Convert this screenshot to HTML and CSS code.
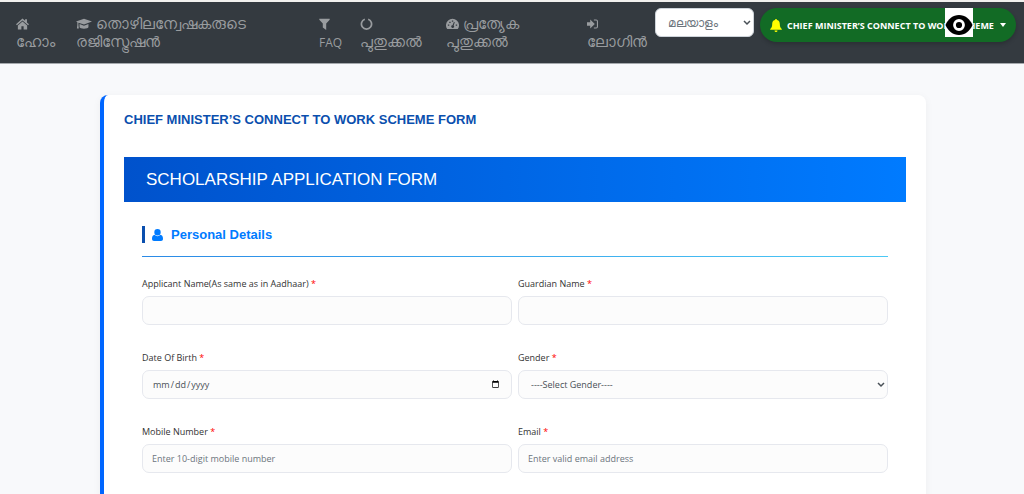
FILE: index.html
```html
<!DOCTYPE html>
<html lang="en">
<head>
    <meta charset="UTF-8">
    <meta name="viewport" content="width=device-width, initial-scale=1.0">
    <title>Scholarship Application Form</title>
    <link rel="stylesheet" href="styles.css">
</head>
<body>
    <header class="navbar">
        <nav class="nav-links">
            <a href="#">
                <svg class="icon" viewBox="0 0 14 12"><path d="M7 0 0 6.300l1 1.100 6-5.200 6 5.200 1-1.100-2.200-2V.8H9.800v1.700zM7 3.200 2 7.500V12h3.800V8.500h2.400V12H12V7.500z"/></svg><br>
                <span>ഹോം</span>
            </a>
            <a href="#">
                <svg class="icon icon-wide" viewBox="0 0 18 12"><path d="M9 0 0 3.200l1.500.7V7L1 11h2.200L2.700 7V4.500L9 6.700l9-3.500zM4 6v3.500c0 2.300 10 2.300 10 0V6L9 8z"/></svg>
                <span>തൊഴിലന്വേഷകരുടെ രജിസ്ട്രേഷൻ</span>
            </a>
            <a href="#">
                <svg class="icon icon-small" viewBox="0 0 11 12"><path d="M.3.800h10.400v1L7.200 5.600V12L3.800 9.500V5.600L.3 1.800z"/></svg><br>
                <span class="latin">FAQ</span>
            </a>
            <a href="#">
                <svg class="icon" viewBox="0 0 14 14"><path class="ring" d="M5 1.500a5.900 5.900 0 1 0 4 0"/></svg><br>
                <span>പുതുക്കൽ</span>
            </a>
            <a href="#">
                <svg class="icon" viewBox="0 0 14 12"><path fill-rule="evenodd" d="M1.300 11.500A7 7 0 1 1 12.700 11.500zM2 6.500v1.500h1.500V6.500zm1.500-3V5H5V3.500zm2.800-1.300v1.500h1.500V2.200zm4.200 4.300V8H12V6.500zM8.500 3.800 7 7.300a1.500 1.500 0 1 0 1.200.4l1.300-3.500z"/></svg>
                <span>പ്രത്യേക പുതുക്കൽ</span>
            </a>
            <a href="#">
                <svg class="icon icon-small" viewBox="0 0 12 12"><path d="M0 4h3.500V1L8.500 6l-5 5V8H0zM7.500 1H10a2 2 0 0 1 2 2v6a2 2 0 0 1-2 2H7.500V9.800H10a.8.8 0 0 0 .8-.8V3a.8.8 0 0 0-.8-.8H7.500z"/></svg><br>
                <span>ലോഗിൻ</span>
            </a>
        </nav>
        <select class="language" aria-label="Language">
            <option>മലയാളം</option>
        </select>
        <button class="scheme-btn" type="button">
            <svg class="bell" viewBox="0 0 12 13"><path d="M6 0a1 1 0 0 0-1 1C2.800 1.500 2.200 3.300 2.200 5 2.200 8 1.300 9 .2 10v.8h11.600V10c-1.100-1-2-2-2-5 0-1.700-.6-3.500-2.800-4a1 1 0 0 0-1-1zM4.500 11.500a1.500 1.500 0 0 0 3 0z"/></svg>
            <span>CHIEF MINISTER’S CONNECT TO WORK SCHEME</span>
            <span class="caret"></span>
            <svg class="eye" viewBox="0 0 28 29"><path fill="#fff" d="M0 0h28v29H0z"/><path d="M.5 17C3 11 8 7 14 7s11 4 13.500 10C25 23 20 27 14 27S3 23 .5 17z"/><circle cx="14" cy="17" r="4.500" fill="none" stroke="#fff" stroke-width="2.800"/></svg>
        </button>
    </header>

    <main class="page">
        <div class="card">
            <h1>CHIEF MINISTER’S CONNECT TO WORK SCHEME FORM</h1>
            <h2 class="banner">SCHOLARSHIP APPLICATION FORM</h2>
            <form class="details">
                <div class="section-head">
                    <h3>
                        <svg class="user" viewBox="0 0 11 12"><path d="M5.500 0a3 3 0 0 1 0 6.400 3 3 0 0 1 0-6.400zM2.600 5.800c1.500 1.900 4.300 1.900 5.800 0C10.200 6 11 7.800 11 9.800c0 1.400-.8 2.200-2 2.200H2c-1.200 0-2-.8-2-2.200 0-2 .8-3.800 2.600-4z"/></svg>
                        Personal Details
                    </h3>
                </div>
                <div class="form-grid">
                    <div class="form-group">
                        <label for="applicant">Applicant Name(As same as in Aadhaar) <span class="required">*</span></label>
                        <input type="text" id="applicant">
                    </div>
                    <div class="form-group">
                        <label for="guardian">Guardian Name <span class="required">*</span></label>
                        <input type="text" id="guardian">
                    </div>
                    <div class="form-group">
                        <label for="dob">Date Of Birth <span class="required">*</span></label>
                        <input type="date" id="dob">
                    </div>
                    <div class="form-group">
                        <label for="gender">Gender <span class="required">*</span></label>
                        <select id="gender">
                            <option>----Select Gender----</option>
                        </select>
                    </div>
                    <div class="form-group">
                        <label for="mobile">Mobile Number <span class="required">*</span></label>
                        <input type="tel" id="mobile" placeholder="Enter 10-digit mobile number">
                    </div>
                    <div class="form-group">
                        <label for="email">Email <span class="required">*</span></label>
                        <input type="email" id="email" placeholder="Enter valid email address">
                    </div>
                </div>
            </form>
        </div>
    </main>
</body>
</html>
```
FILE: styles.css
```css
* {
    box-sizing: border-box;
}

body {
    margin: 0;
    background-color: #f8f9fb;
    font-family: "Trebuchet MS", "Open Sans", sans-serif;
    font-size: 10px;
    color: #333;
}

h1,
h2,
h3 {
    margin: 0;
    font-family: "Liberation Sans", Arial, sans-serif;
}

.navbar {
    display: flex;
    align-items: flex-start;
    gap: 6px;
    padding: 6px 8px 10px 16px;
    min-height: 64px;
    background-color: #343a40;
    border-top: 2px solid #f1f0ee;
    border-bottom: 1px solid #a5a9ad;
}

.nav-links {
    flex: 1;
    display: grid;
    grid-template-columns: 60fr 243fr 41fr 86fr 141fr 62fr;
    padding-top: 6px;
}

.nav-links a {
    color: #999c9f;
    font-size: 15px;
    line-height: 18px;
    text-decoration: none;
}

.nav-links a:nth-child(2),
.nav-links a:nth-child(5) {
    padding-right: 48px;
}

.nav-links .latin {
    font-size: 12px;
    font-weight: 500;
}

.icon {
    width: 13px;
    height: 12px;
    vertical-align: -1px;
    fill: currentColor;
}

.icon-wide {
    width: 16px;
}

.icon-small {
    width: 11px;
}

.ring {
    fill: none;
    stroke: currentColor;
    stroke-width: 2;
}

.language,
.form-group select {
    appearance: none;
    background-image: url("data:image/svg+xml,%3Csvg xmlns='http://www.w3.org/2000/svg' viewBox='0 0 8 6'%3E%3Cpath d='M1 1l3 3 3-3' fill='none' stroke='%23495057' stroke-width='1.500'/%3E%3C/svg%3E");
    background-repeat: no-repeat;
    background-position: right 2px center;
    background-size: 8px 6px;
}

.language {
    width: 99px;
    height: 29px;
    padding: 0 12px;
    border: 1px solid #ced4da;
    border-radius: 6px;
    background-color: #fff;
    color: #6c757d;
    font: inherit;
    font-size: 12px;
}

.scheme-btn {
    position: relative;
    display: flex;
    align-items: center;
    gap: 5px;
    width: 256px;
    height: 34px;
    padding: 0 10px;
    border: none;
    border-radius: 17px;
    background-color: #126b25;
    box-shadow: 0 2px 4px rgba(0, 0, 0, 0.2);
    color: #fff;
    font: inherit;
    font-size: 9px;
    font-weight: bold;
    white-space: nowrap;
}

.bell {
    width: 12px;
    height: 13px;
    fill: #ff0;
}

.caret {
    margin-left: auto;
    border-top: 4px solid #fff;
    border-left: 3px solid transparent;
    border-right: 3px solid transparent;
}

.eye {
    position: absolute;
    top: 0;
    right: 43px;
    width: 28px;
    height: 29px;
}

.page {
    padding: 31px 98px 0 100px;
}

.card {
    padding: 16px 20px 40px;
    background-color: #fff;
    border-left: 4px solid #06f;
    border-radius: 8px;
    box-shadow: 0 2px 8px rgba(0, 0, 0, 0.05);
}

.card h1 {
    color: #0a4fae;
    font-size: 13px;
    line-height: 18px;
}

.banner {
    margin-top: 28px;
    padding: 11px 22px;
    background: linear-gradient(90deg, #0052cc, #007bff);
    color: #fff;
    font-size: 17px;
    font-weight: normal;
    line-height: 23px;
}

.details {
    padding: 24px 18px 0;
}

.section-head {
    padding-bottom: 13px;
    border-bottom: 1px solid;
    border-image: linear-gradient(90deg, #2b8ae6, #4cc9f5) 1;
}

.section-head h3 {
    display: flex;
    align-items: center;
    gap: 8px;
    padding-left: 7px;
    border-left: 3px solid #0a4fae;
    color: #007bff;
    font-size: 13px;
    line-height: 17px;
}

.user {
    width: 11px;
    height: 12px;
    fill: currentColor;
}

.form-grid {
    display: grid;
    grid-template-columns: 1fr 1fr;
    gap: 25px 6px;
    padding-top: 19px;
}

.form-group label {
    display: block;
    margin-bottom: 5px;
    font-size: 9px;
    font-weight: 500;
    line-height: 15px;
}

.required {
    color: #f00;
}

.form-group input,
.form-group select {
    display: block;
    width: 100%;
    height: 29px;
    padding: 0 9px;
    border: 1px solid #e6e8ee;
    border-radius: 7px;
    background-color: #fcfcfc;
    color: #495057;
    font: inherit;
    font-size: 9px;
    font-weight: 500;
}

.form-group select {
    padding: 0 12px;
}

.form-group input::placeholder {
    color: #6c757d;
}
```
